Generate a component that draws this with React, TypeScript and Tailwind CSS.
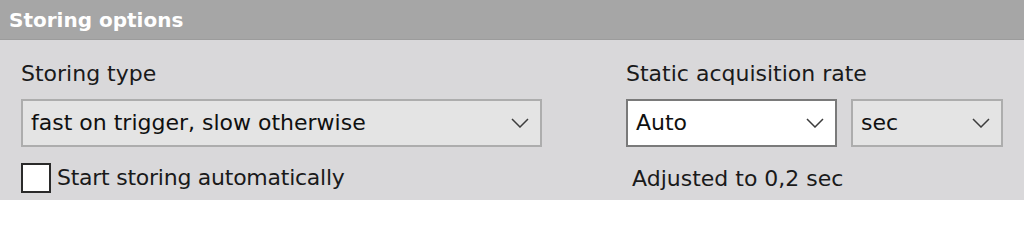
import React from 'react';

const Chevron: React.FC = () => (
    <svg width="18" height="10" viewBox="0 0 18 10" className="shrink-0">
        <path d="M1 1 L9 9 L17 1" fill="none" stroke="#3c3c3c" strokeWidth="1.5" />
    </svg>
);

const Select: React.FC<{ value: string; className: string; active?: boolean }> = ({ value, className, active }) => (
    <div
        className={
            'h-[48px] flex items-center justify-between pl-[8px] pr-[11px] border-2 ' +
            (active ? 'bg-white border-[#7a7a7a] ' : 'bg-[#e4e4e4] border-[#adadad] ') +
            className
        }
    >
        <span className="text-[22px] text-[#101010] leading-none">{value}</span>
        <Chevron />
    </div>
);

const App: React.FC = () => {
    return (
        <div className="w-[1024px] h-[200px] bg-[#d9d8da] overflow-hidden" style={{ fontFamily: '"DejaVu Sans", Verdana, sans-serif' }}>
            <div className="h-[40px] bg-[#a6a6a6] flex items-center pl-[9px] border-b border-[#9c9c9c]">
                <span className="text-[20px] font-bold text-white leading-none">Storing options</span>
            </div>

            <div className="flex px-[21px] pt-[21px]">
                <div className="w-[521px]">
                    <div className="text-[22px] leading-[26px] text-[#1a1a1a] h-[38px]">Storing type</div>
                    <Select value="fast on trigger, slow otherwise" className="w-[521px]" />
                    <div className="flex items-center gap-[6px] mt-[16px]">
                        <div className="w-[30px] h-[30px] bg-white border-2 border-[#2a2a2a]" />
                        <span className="text-[22px] leading-none text-[#1a1a1a] tracking-[-0.25px]">Start storing automatically</span>
                    </div>
                </div>

                <div className="ml-[84px]">
                    <div className="text-[22px] leading-[26px] text-[#1a1a1a] h-[38px]">Static acquisition rate</div>
                    <div className="flex gap-[14px]">
                        <Select value="Auto" className="w-[211px]" active />
                        <Select value="sec" className="w-[152px]" />
                    </div>
                    <div className="text-[22px] leading-none text-[#1a1a1a] mt-[21px] pl-[6px]">Adjusted to 0,2 sec</div>
                </div>
            </div>
        </div>
    );
};

export default App;
